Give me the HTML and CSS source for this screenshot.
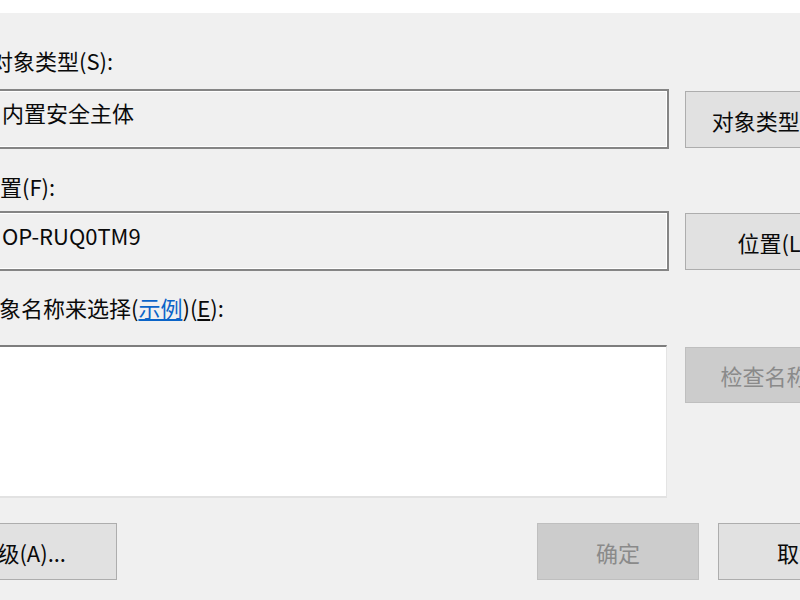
FILE: index.html
```html
<!DOCTYPE html>
<html lang="zh-CN">
<head>
<meta charset="utf-8">
<title>选择用户或组</title>
<link rel="stylesheet" href="styles.css">
</head>
<body>
<div class="topband"></div>
<div class="dialog">
  <div class="label label-first"><span class="cut">对</span>象类型(S):</div>
  <div class="row row-1">
    <div class="field"><span class="field-text">内置安全主体</span></div>
    <div class="btn">对象类型(T)...</div>
  </div>
  <div class="label label-2">置(F):</div>
  <div class="row row-2">
    <div class="field"><span class="field-text">OP-RUQ0TM9</span></div>
    <div class="btn btn-loc">位置(L)...</div>
  </div>
  <div class="label label-3">象名称来选择(<span class="link">示例</span>)(<span class="ul">E</span>):</div>
  <div class="row row-3">
    <div class="textarea"></div>
    <div class="btn btn-disabled btn-check">检查名称(C)</div>
  </div>
  <div class="footer">
    <div class="btn btn-adv">级(A)...</div>
    <div class="footer-right">
      <div class="btn btn-disabled btn-foot">确定</div>
      <div class="btn btn-foot">取消</div>
    </div>
  </div>
</div>
</body>
</html>
```
FILE: styles.css
```css
html, body {
  margin: 0;
  padding: 0;
  width: 800px;
  height: 600px;
  overflow: hidden;
  background: #f0f0f0;
}

body {
  font-family: "Noto Sans CJK SC", "Noto Sans", sans-serif;
  font-size: 22px;
  color: #0a0a0a;
}

.topband {
  height: 13px;
  background: #ffffff;
}

.dialog {
  display: flex;
  flex-direction: column;
  width: 900px;
}

.label {
  height: 30px;
  line-height: 30px;
  white-space: nowrap;
}

.label-first {
  margin-top: 32px;
  margin-left: -9px;
}

.label-2 {
  margin-top: 22px;
}

.label-3 {
  margin-top: 21px;
  margin-left: -1px;
}

.link {
  color: #0a64c8;
  text-decoration: underline;
}

.ul {
  text-decoration: underline;
}

.row {
  display: flex;
  align-items: flex-start;
  gap: 16px;
}

.row-1 {
  margin-top: 14px;
}

.row-2 {
  margin-top: 10px;
}

.row-3 {
  margin-top: 23px;
}

.field {
  box-sizing: border-box;
  width: 673px;
  height: 60px;
  margin-left: -4px;
  border: 2px solid #858585;
  box-shadow: inset 0 0 0 1px #ffffff;
  background: #f0f0f0;
  padding: 6px 0 0 4px;
  line-height: 30px;
  white-space: nowrap;
}

.row-2 .field {
  padding-top: 7px;
}

.textarea {
  box-sizing: border-box;
  width: 671px;
  height: 153px;
  margin-left: -4px;
  background: #ffffff;
  border-top: 2px solid #7d7d7d;
  border-right: 1px solid #e4e4e4;
  border-bottom: 2px solid #e2e2e2;
  margin-right: 2px;
}

.btn {
  box-sizing: border-box;
  width: 188px;
  height: 57px;
  margin-top: 2px;
  border: 1px solid #adadad;
  background: #e1e1e1;
  display: flex;
  align-items: center;
  justify-content: center;
  white-space: nowrap;
  flex-shrink: 0;
}

.btn-loc {
  width: 194px;
}

.btn-disabled {
  background: #cccccc;
  border-color: #bfbfbf;
  color: #8a8a8a;
}

.btn-check {
  height: 56px;
}

.footer {
  display: flex;
  align-items: flex-start;
  margin-top: 25px;
  width: 880px;
}

.btn-adv {
  margin-top: 0;
  width: 160px;
  margin-left: -43px;
  justify-content: flex-end;
  padding-right: 50px;
}

.footer-right {
  margin-left: auto;
  display: flex;
  gap: 19px;
}

.btn-foot {
  margin-top: 0;
  width: 162px;
}
```
